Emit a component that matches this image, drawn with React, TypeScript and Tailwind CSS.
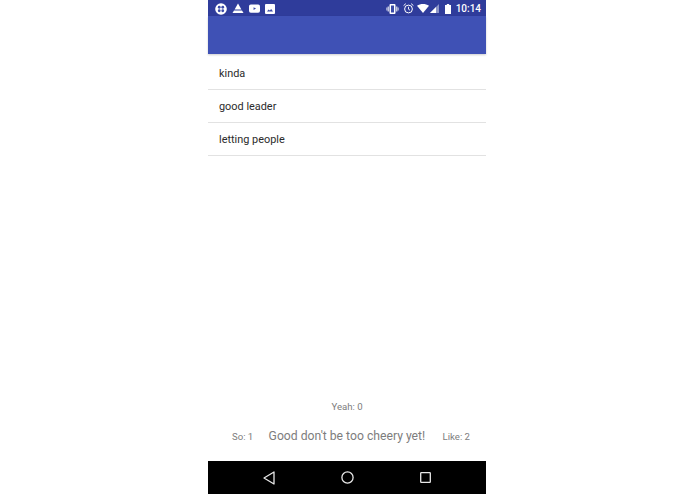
const items = ['kinda', 'good leader', 'letting people'];

function StatusLeft() {
  return (
    <div className="flex items-center gap-[5px]">
      <svg width="12" height="12" viewBox="0 0 13 13">
        <circle cx="6.5" cy="6.5" r="6.3" fill="#fff" />
        <circle cx="4.6" cy="4.6" r="1.5" fill="#3a4aa8" />
        <circle cx="8.4" cy="4.6" r="1.5" fill="#3a4aa8" />
        <circle cx="4.6" cy="8.4" r="1.5" fill="#3a4aa8" />
        <circle cx="8.4" cy="8.4" r="1.5" fill="#3a4aa8" />
      </svg>
      <svg width="12" height="11" viewBox="0 0 12 11">
        <path d="M6 0.5 L9.4 6.5 H2.6 Z" fill="#fff" />
        <path d="M2 7.5 H10 L11.5 10 H0.5 Z" fill="#fff" />
      </svg>
      <svg width="11" height="9" viewBox="0 0 12 9">
        <rect width="12" height="9" rx="2" fill="#fff" />
        <path d="M5 3 L7.6 4.5 L5 6 Z" fill="#3a4aa8" />
      </svg>
      <svg width="10" height="10" viewBox="0 0 10 10">
        <rect width="10" height="10" rx="1" fill="#fff" />
        <path d="M2 7.5 L3.6 5.5 L4.8 6.6 L6.2 5 L8 7.5 Z" fill="#3a4aa8" />
      </svg>
    </div>
  );
}

function StatusRight() {
  return (
    <div className="flex items-center">
      <svg width="13" height="10" viewBox="0 0 12 10" className="mr-[4px]">
        <rect x="3" y="0" width="6" height="10" rx="1" fill="#fff" />
        <rect x="4.5" y="1.5" width="3" height="7" fill="#3a4aa8" />
        <rect x="1.2" y="2.5" width="1" height="5" fill="#fff" />
        <rect x="9.8" y="2.5" width="1" height="5" fill="#fff" />
        <rect x="0" y="3.5" width="0.8" height="3" fill="#fff" />
        <rect x="11.2" y="3.5" width="0.8" height="3" fill="#fff" />
      </svg>
      <svg width="11" height="11" viewBox="0 0 11 11" className="mr-[3px]">
        <circle cx="5.5" cy="6" r="3.9" fill="none" stroke="#fff" strokeWidth="1" />
        <path d="M5.5 3.8 V6.2 L7 7.2" fill="none" stroke="#fff" strokeWidth="0.9" />
        <path d="M0.6 2.6 L2.8 0.7 M10.4 2.6 L8.2 0.7" stroke="#fff" strokeWidth="1" />
      </svg>
      <svg width="12" height="9" viewBox="0 0 12 9" className="mr-px">
        <path d="M0 1.8 C3.5 -0.6 8.5 -0.6 12 1.8 L6 9 Z" fill="#fff" />
      </svg>
      <svg width="9" height="9" viewBox="0 0 9 9" className="mr-[6px]">
        <path d="M9 0 V9 H0 Z" fill="#fff" fillOpacity="0.45" />
        <path d="M6 3 V9 H0 Z" fill="#fff" />
      </svg>
      <svg width="6" height="10" viewBox="0 0 6 10" className="mr-[5px]">
        <rect x="1.8" width="2.4" height="1" fill="#fff" />
        <rect y="1" width="6" height="9" fill="#fff" />
      </svg>
      <span className="text-[10px] leading-none font-medium text-white font-['Roboto',sans-serif]">10:14</span>
    </div>
  );
}

export default function App() {
  return (
    <div className="flex pl-[208px] bg-white h-[494px] font-['Roboto',sans-serif]">
      <div className="flex flex-col w-[278px] h-full">
        <div className="flex items-center justify-between h-[16px] pt-px pl-[7px] pr-[5px] bg-[#2f3c9b]">
          <StatusLeft />
          <StatusRight />
        </div>
        <div className="h-[38px] bg-[#3f51b5] shadow-[0_1px_2px_rgba(0,0,0,0.2)]" />
        <ul className="flex flex-col pt-[2px]">
          {items.map((item, i) => (
            <li
              key={item}
              className={`flex items-center pl-[11px] pt-[3px] border-b border-[#e2e2e2] text-[10.9px] text-[#2b2b2b] ${i === 0 ? 'h-[34px]' : 'h-[33px]'}`}
            >
              {item}
            </li>
          ))}
        </ul>
        <div className="flex-1 flex flex-col justify-end">
          <div className="text-center text-[9.6px] leading-none text-[#7d7d7d] mb-[18px]">Yeah: 0</div>
          <div className="flex items-center justify-between pl-[24px] pr-[16px] mb-[17px] text-[#7d7d7d]">
            <span className="text-[9.6px] leading-none">So: 1</span>
            <span className="pr-[2px] pb-[2px] text-[12.2px] leading-none">Good don't be too cheery yet!</span>
            <span className="text-[9.6px] leading-none">Like: 2</span>
          </div>
        </div>
        <div className="flex items-center justify-center gap-[66px] h-[33px] bg-black">
          <svg width="12" height="14" viewBox="0 0 12 14">
            <path d="M11 1 L1 7 L11 13 Z" fill="none" stroke="#e8e8e8" strokeWidth="1.3" strokeLinejoin="round" />
          </svg>
          <svg width="13" height="13" viewBox="0 0 13 13">
            <circle cx="6.5" cy="6.5" r="5.6" fill="none" stroke="#e8e8e8" strokeWidth="1.3" />
          </svg>
          <svg width="11" height="11" viewBox="0 0 11 11">
            <rect x="0.7" y="0.7" width="9.6" height="9.6" rx="0.6" fill="none" stroke="#e8e8e8" strokeWidth="1.3" />
          </svg>
        </div>
      </div>
    </div>
  );
}
